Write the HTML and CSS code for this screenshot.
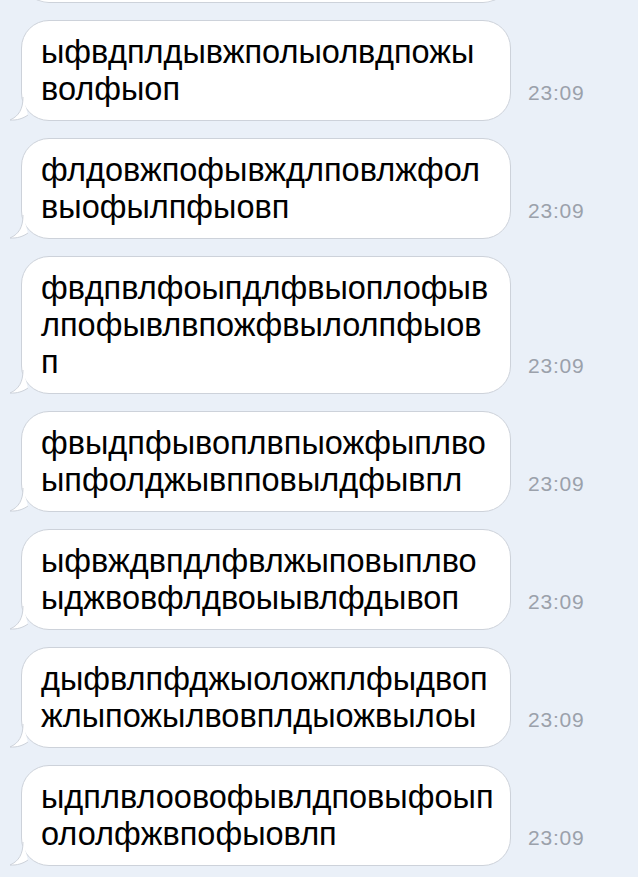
FILE: index.html
```html
<!DOCTYPE html>
<html lang="ru">
  <head>
    <meta charset="UTF-8" />
    <meta name="viewport" content="width=device-width, initial-scale=1.0" />
    <title>Чат</title>
    <link rel="stylesheet" href="styles.css">
  </head>
  <body>
    <div class="chat">
      <!-- previous message, only its bottom edge is on screen -->
      <div class="message message-cut">
        <div class="bubble bubble-stub"></div>
      </div>

      <div class="message">
        <div class="bubble">
          <p class="text">ыфвдплдывжполыолвдпожы<br>волфыоп</p>
          <svg class="tail" width="20" height="24" viewBox="0 0 20 24"><path d="M14 0 C14 12 10 19 1 23 C8 23.5 14 21.5 19 18" fill="#fff" stroke="#cdd2da" stroke-width="1"/></svg>
        </div>
        <span class="time">23:09</span>
      </div>

      <div class="message">
        <div class="bubble">
          <p class="text">флдовжпофывждлповлжфол<br>выофылпфыовп</p>
          <svg class="tail" width="20" height="24" viewBox="0 0 20 24"><path d="M14 0 C14 12 10 19 1 23 C8 23.5 14 21.5 19 18" fill="#fff" stroke="#cdd2da" stroke-width="1"/></svg>
        </div>
        <span class="time">23:09</span>
      </div>

      <div class="message">
        <div class="bubble">
          <p class="text">фвдпвлфоыпдлфвыоплофыв<br>лпофывлвпожфвылолпфыов<br>п</p>
          <svg class="tail" width="20" height="24" viewBox="0 0 20 24"><path d="M14 0 C14 12 10 19 1 23 C8 23.5 14 21.5 19 18" fill="#fff" stroke="#cdd2da" stroke-width="1"/></svg>
        </div>
        <span class="time">23:09</span>
      </div>

      <div class="message">
        <div class="bubble">
          <p class="text">фвыдпфывоплвпыожфыплво<br>ыпфолджывпповылдфывпл</p>
          <svg class="tail" width="20" height="24" viewBox="0 0 20 24"><path d="M14 0 C14 12 10 19 1 23 C8 23.5 14 21.5 19 18" fill="#fff" stroke="#cdd2da" stroke-width="1"/></svg>
        </div>
        <span class="time">23:09</span>
      </div>

      <div class="message">
        <div class="bubble">
          <p class="text">ыфвждвпдлфвлжыповыплво<br>ыджвовфлдвоыывлфдывоп</p>
          <svg class="tail" width="20" height="24" viewBox="0 0 20 24"><path d="M14 0 C14 12 10 19 1 23 C8 23.5 14 21.5 19 18" fill="#fff" stroke="#cdd2da" stroke-width="1"/></svg>
        </div>
        <span class="time">23:09</span>
      </div>

      <div class="message">
        <div class="bubble">
          <p class="text">дыфвлпфджыоложплфыдвоп<br>жлыпожылвовплдыожвылоы</p>
          <svg class="tail" width="20" height="24" viewBox="0 0 20 24"><path d="M14 0 C14 12 10 19 1 23 C8 23.5 14 21.5 19 18" fill="#fff" stroke="#cdd2da" stroke-width="1"/></svg>
        </div>
        <span class="time">23:09</span>
      </div>

      <div class="message">
        <div class="bubble">
          <p class="text">ыдплвлоовофывлдповыфоып<br>ололфжвпофыовлп</p>
          <svg class="tail" width="20" height="24" viewBox="0 0 20 24"><path d="M14 0 C14 12 10 19 1 23 C8 23.5 14 21.5 19 18" fill="#fff" stroke="#cdd2da" stroke-width="1"/></svg>
        </div>
        <span class="time">23:09</span>
      </div>
    </div>
  </body>
</html>
```

FILE: styles.css
```css
body {
  font-family: "Liberation Sans", Arial, sans-serif;
  background-color: #eaf0f8;
  margin: 0;
  padding: 0;
  overflow: hidden;
}

.chat {
  display: flex;
  flex-direction: column;
  gap: 17px;
  padding-left: 21px;
}

.message {
  display: flex;
  align-items: flex-end;
  gap: 17px;
}

.message-cut {
  margin-top: -37px;
}

.bubble {
  position: relative;
  width: 490px;
  box-sizing: border-box;
  background-color: #fff;
  border: 1px solid #cdd2da;
  border-radius: 28px;
  padding: 13px 19px 12px;
}

.bubble-stub {
  height: 40px;
  border-top: none;
  border-radius: 0 0 28px 28px;
}

.text {
  margin: 0;
  font-size: 32.5px;
  line-height: 37px;
  color: #000;
  white-space: nowrap;
}

.tail {
  position: absolute;
  left: -13px;
  bottom: -1px;
}

.time {
  font-size: 21px;
  letter-spacing: 0.8px;
  color: #9ba1ab;
  padding-bottom: 16px;
}
```
